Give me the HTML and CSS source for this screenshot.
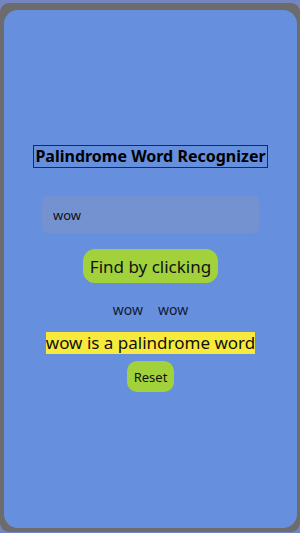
FILE: index.html
```html
<!DOCTYPE html>
<html lang="en">
<head>
    <meta charset="UTF-8">
    <meta name="viewport" content="width=device-width, initial-scale=1.0">
    <title>Palindrome Word Recognizer</title>
    <link rel="stylesheet" href="styles.css">
</head>
<body>
    <div class="phone">
        <div class="screen">
            <h1 class="title">Palindrome Word Recognizer</h1>
            <input type="text" id="word" class="word-input" value="wow">
            <button class="find-btn" onclick="findPalindrome()">Find by clicking</button>
            <div class="compare">
                <span id="original">wow</span>
                <span id="reversed">wow</span>
            </div>
            <div id="result" class="result">wow is a palindrome word</div>
            <button class="reset-btn" onclick="resetAll()">Reset</button>
        </div>
    </div>

    <script>
        function findPalindrome() {
            const word = document.getElementById("word").value;
            const reversed = word.split("").reverse().join("");
            document.getElementById("original").textContent = word;
            document.getElementById("reversed").textContent = reversed;
            const result = document.getElementById("result");
            if (word.toLowerCase() === reversed.toLowerCase()) {
                result.textContent = `${word} is a palindrome word`;
            } else {
                result.textContent = `${word} is not a palindrome word`;
            }
        }

        function resetAll() {
            document.getElementById("word").value = "";
            document.getElementById("original").textContent = "";
            document.getElementById("reversed").textContent = "";
            document.getElementById("result").textContent = "";
        }
    </script>
</body>
</html>
```

FILE: styles.css
```css
body {
    margin: 0;
    padding: 3px 0 0 0;
    background-color: #7585c0;
    font-family: "Noto Sans", "Open Sans", sans-serif;
}
.phone {
    box-sizing: border-box;
    width: 300px;
    height: 529px;
    padding: 7px 3px 4px 4px;
    background: #6c6c6c;
    border-radius: 9px;
}
.screen {
    height: 100%;
    background: #6690de;
    border-radius: 14px;
    display: flex;
    flex-direction: column;
    align-items: center;
}
.title {
    margin: 135px 0 0 0;
    padding: 0 1px;
    font-size: 16px;
    font-weight: bold;
    line-height: 21px;
    color: #000;
    border: 1px solid #1f2a44;
}
.word-input {
    box-sizing: border-box;
    width: 217px;
    height: 37px;
    margin-top: 28px;
    padding: 0 11px;
    border: none;
    border-radius: 5px;
    background: #7592d0;
    font-family: inherit;
    font-size: 13px;
    color: #111;
    outline: none;
}
.find-btn {
    margin-top: 16px;
    height: 34px;
    padding: 0 7px;
    border: none;
    border-radius: 12px;
    background: #a1d23c;
    font-family: inherit;
    font-size: 17px;
    color: #111;
    cursor: pointer;
}
.compare {
    margin-top: 17px;
    display: flex;
    gap: 15px;
    font-size: 14px;
    color: #111a33;
}
.result {
    margin-top: 13px;
    padding: 0;
    background: #f7ea3c;
    font-size: 17px;
    line-height: 22px;
    color: #111;
}
.reset-btn {
    margin-top: 7px;
    height: 31px;
    padding: 0 7px;
    border: none;
    border-radius: 10px;
    background: #a1d23c;
    font-family: inherit;
    font-size: 13px;
    color: #111;
    cursor: pointer;
}
```
